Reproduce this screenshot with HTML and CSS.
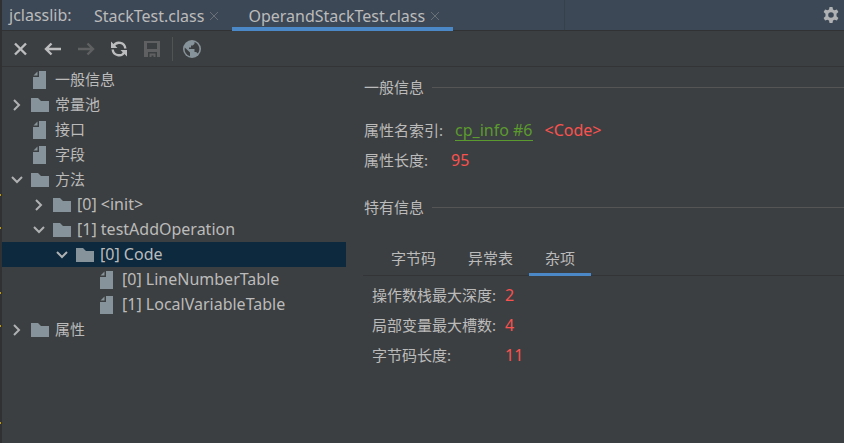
FILE: index.html
```
<!DOCTYPE html>
<html lang="zh-CN">
<head>
<meta charset="utf-8">
<title>jclasslib</title>
<link rel="stylesheet" href="styles.css">
</head>
<body>
<svg class="defs" aria-hidden="true">
  <symbol id="folder" viewBox="0 0 18 14"><path d="M0 0h7l3 3h8v11H0z"/></symbol>
  <symbol id="file" viewBox="0 0 13 18"><path d="M6 0h7v18H0V6h6zM4.500 .5v4H.5z"/></symbol>
  <symbol id="right" viewBox="0 0 12 12"><path d="M3 1l5 5-5 5"/></symbol>
  <symbol id="down" viewBox="0 0 12 12"><path d="M1 3l5 5 5-5"/></symbol>
  <symbol id="close" viewBox="0 0 10 10"><path d="M1 1l8 8M9 1L1 9"/></symbol>
</svg>
<div class="window">
  <div class="gutter" aria-hidden="true"><i class="m1"></i><i class="m2"></i><i class="m3"></i><i class="m4"></i><i class="m5"></i></div>
  <div class="main">
    <header class="tabbar">
      <span class="title">jclasslib:</span>
      <div class="filetab"><span>StackTest.class</span><button class="x" aria-label="Close StackTest.class"><svg><use href="#close"/></svg></button></div>
      <div class="filetab active"><span>OperandStackTest.class</span><button class="x" aria-label="Close OperandStackTest.class"><svg><use href="#close"/></svg></button></div>
      <span class="seam"></span>
      <button class="gear" aria-label="Settings"><svg viewBox="0 0 16 16"><path fill-rule="evenodd" d="M6.500 0h3l.5 2.400 1.500.9 2.400-.8 1.500 2.600-1.900 1.600v2.600l1.900 1.600-1.500 2.600-2.400-.8-1.500.9-.5 2.400h-3L6 13.600l-1.500-.9-2.400.8L.6 10.900l1.900-1.600V6.700L.6 5.100l1.500-2.600 2.400.8L6 2.400zM8 5.200a2.800 2.800 0 1 0 0 5.600 2.800 2.800 0 0 0 0-5.600z"/></svg></button>
    </header>
    <div class="toolbar">
      <button aria-label="Close"><svg viewBox="0 0 18 18"><path class="stroke" d="M4 3.500l11 11M15 3.500l-11 11"/></svg></button>
      <button aria-label="Back"><svg viewBox="0 0 18 18"><path class="stroke" d="M17 9H2M7.500 3.500L2 9l5.500 5.500"/></svg></button>
      <button disabled aria-label="Forward"><svg viewBox="0 0 18 18"><path class="stroke" d="M1 9h15M10.500 3.500L16 9l-5.500 5.500"/></svg></button>
      <button aria-label="Reload"><svg viewBox="0 0 18 18"><path class="stroke" d="M3.500 6A6.300 6.300 0 0 1 15.300 8.500M14.500 12A6.300 6.300 0 0 1 2.700 9.500"/><path d="M1 1.500V8h6.500zM17 16.500V10h-6.500z"/></svg></button>
      <button disabled aria-label="Save"><svg viewBox="0 0 18 18"><path fill-rule="evenodd" d="M1 1h16v16h-3v-5H5v5H1zM4 3v6h10V3zM6.500 13.500h6V17h-2v-1.500h-2V17h-2z"/></svg></button>
      <span class="divider"></span>
      <button class="web" aria-label="Open in browser"><svg viewBox="0 0 18 18"><circle cx="9" cy="9" r="9"/><path class="land" d="M1.800 7.500L7 12.500v3.700a7.400 7.400 0 0 1-5.200-8.700zM11.500 2.100v1.700L9.800 5.500H8v2H6V9h5.500v3h1.700l1.500 1.600A7.300 7.300 0 0 0 11.500 2.100z"/></svg></button>
    </div>
    <div class="content">
      <ul class="tree">
        <li><span class="arrow"></span><svg class="file"><use href="#file"/></svg>一般信息</li>
        <li><svg class="arrow"><use href="#right"/></svg><svg class="folder"><use href="#folder"/></svg>常量池</li>
        <li><span class="arrow"></span><svg class="file"><use href="#file"/></svg>接口</li>
        <li><span class="arrow"></span><svg class="file"><use href="#file"/></svg>字段</li>
        <li><svg class="arrow"><use href="#down"/></svg><svg class="folder"><use href="#folder"/></svg>方法</li>
        <li class="code l1"><svg class="arrow"><use href="#right"/></svg><svg class="folder"><use href="#folder"/></svg>[0] &lt;init&gt;</li>
        <li class="code l1"><svg class="arrow"><use href="#down"/></svg><svg class="folder"><use href="#folder"/></svg>[1] testAddOperation</li>
        <li class="code l2 selected"><svg class="arrow"><use href="#down"/></svg><svg class="folder"><use href="#folder"/></svg>[0] Code</li>
        <li class="code l3"><span class="arrow"></span><svg class="file"><use href="#file"/></svg>[0] LineNumberTable</li>
        <li class="code l3"><span class="arrow"></span><svg class="file"><use href="#file"/></svg>[1] LocalVariableTable</li>
        <li><svg class="arrow"><use href="#right"/></svg><svg class="folder"><use href="#folder"/></svg>属性</li>
      </ul>
      <main class="detail">
        <h2>一般信息</h2>
        <div class="general">
          <div class="row"><span>属性名索引:</span><a class="code" href="#cp6">cp_info #6</a><span class="code value">&lt;Code&gt;</span></div>
          <div class="row"><span class="length">属性长度:</span><span class="code value">95</span></div>
        </div>
        <h2>特有信息</h2>
        <div class="tabs" role="tablist">
          <button role="tab">字节码</button><button role="tab">异常表</button><button role="tab" class="active" aria-selected="true">杂项</button>
        </div>
        <dl>
          <dt>操作数栈最大深度:</dt><dd class="code">2</dd>
          <dt>局部变量最大槽数:</dt><dd class="code">4</dd>
          <dt>字节码长度:</dt><dd class="code">11</dd>
        </dl>
      </main>
    </div>
  </div>
</div>
</body>
</html>
```
FILE: styles.css
```
* { box-sizing: border-box; }
body {
  margin: 0;
  background: #3c3f41;
  color: #bbbbbb;
  font: 15px/25px "Noto Sans", "Noto Sans CJK SC", sans-serif;
}
button {
  padding: 0;
  border: 0;
  background: none;
  color: inherit;
  font: inherit;
}
svg { display: block; fill: currentColor; flex: none; }
.defs { position: absolute; width: 0; height: 0; }
#right, #down, #close { fill: none; stroke: currentColor; stroke-width: 2; }
#close { stroke-width: 1; }
.code, .tabbar { font-size: 16px; }

.window { display: flex; min-height: 100vh; }
.gutter { position: relative; flex: none; width: 2px; background: #2f3133; }
.gutter i { position: absolute; left: 0; width: 1px; height: 2px; background: #c29a0c; }
.m1 { top: 194px; }
.m2 { top: 227px; }
.m3 { top: 292px; }
.m4 { top: 325px; }
.m5 { top: 422px; }
.main { flex: 1; min-width: 0; }

.tabbar {
  display: flex;
  height: 31px;
  padding: 0 5px 0 7px;
  background: #3d4856;
  border-bottom: 1px solid #303234;
}
.title { width: 69px; line-height: 30px; }
.filetab { display: flex; align-items: center; gap: 5px; height: 31px; padding: 0 13px 0 16px; line-height: 30px; }
.filetab.active { box-shadow: inset 0 -4px #4a88c7; }
.x { color: #686f77; }
.x svg { width: 10px; height: 10px; }
.seam { width: 1px; margin-left: 111px; background: #37414d; }
.gear { margin-left: auto; color: #afb1b3; }
.gear svg { width: 16px; height: 16px; }

.toolbar {
  display: flex;
  align-items: center;
  gap: 15px;
  height: 36px;
  padding: 0 9px;
  border-bottom: 1px solid #323436;
  color: #bcbdbe;
}
.toolbar svg { width: 18px; height: 18px; }
.toolbar button:disabled { color: #5e6061; }
.stroke { fill: none; stroke: currentColor; stroke-width: 2.4; }
.divider { width: 1px; height: 24px; margin: 0 -5px 0 -4px; background: #515355; }
.web { color: #87939a; }
.land { fill: #3c3f41; }

.content { display: flex; }
.tree { flex: 0 0 344px; margin: 0; padding: 0; list-style: none; }
.tree li { display: flex; align-items: center; height: 25px; padding-left: 9px; white-space: nowrap; }
.tree .l1 { padding-left: 31px; }
.tree .l2 { padding-left: 54px; }
.tree .l3 { padding-left: 76px; }
.tree .selected { background: #0d293e; }
.arrow { flex: none; width: 12px; height: 12px; margin-right: 8px; color: #afb1b3; }
.folder { width: 18px; height: 14px; margin-right: 6px; color: #87939a; }
.file { width: 13px; height: 18px; margin: 0 9px 0 2px; color: #87939a; }

.detail { flex: 1; min-width: 0; padding: 8px 0 0 18px; }
h2 { display: flex; align-items: center; gap: 8px; margin: 0; font: inherit; }
h2::after { content: ""; flex: 1; height: 1px; background: #555555; }
.general { padding: 15px 0 20px; }
.row { display: flex; height: 30px; line-height: 30px; }
.row a { align-self: center; margin: 0 12px; border-bottom: 1px solid #5b9a2f; color: #5b9a2f; line-height: 20px; text-decoration: none; }
.length { width: 87px; }
.value, dd { color: #f9524f; }
.tabs { display: flex; margin: 22px 0 0 -1px; padding-left: 12px; border-bottom: 1px solid #323436; }
.tabs button { height: 34px; margin-bottom: -1px; padding: 0 16px 2px; }
.tabs .active { box-shadow: inset 0 -3px #4a88c7; }
dl { display: grid; grid-template-columns: 133px 1fr; margin: 4px 0 0; padding-left: 8px; line-height: 30px; }
dd { margin: 0; }
```
